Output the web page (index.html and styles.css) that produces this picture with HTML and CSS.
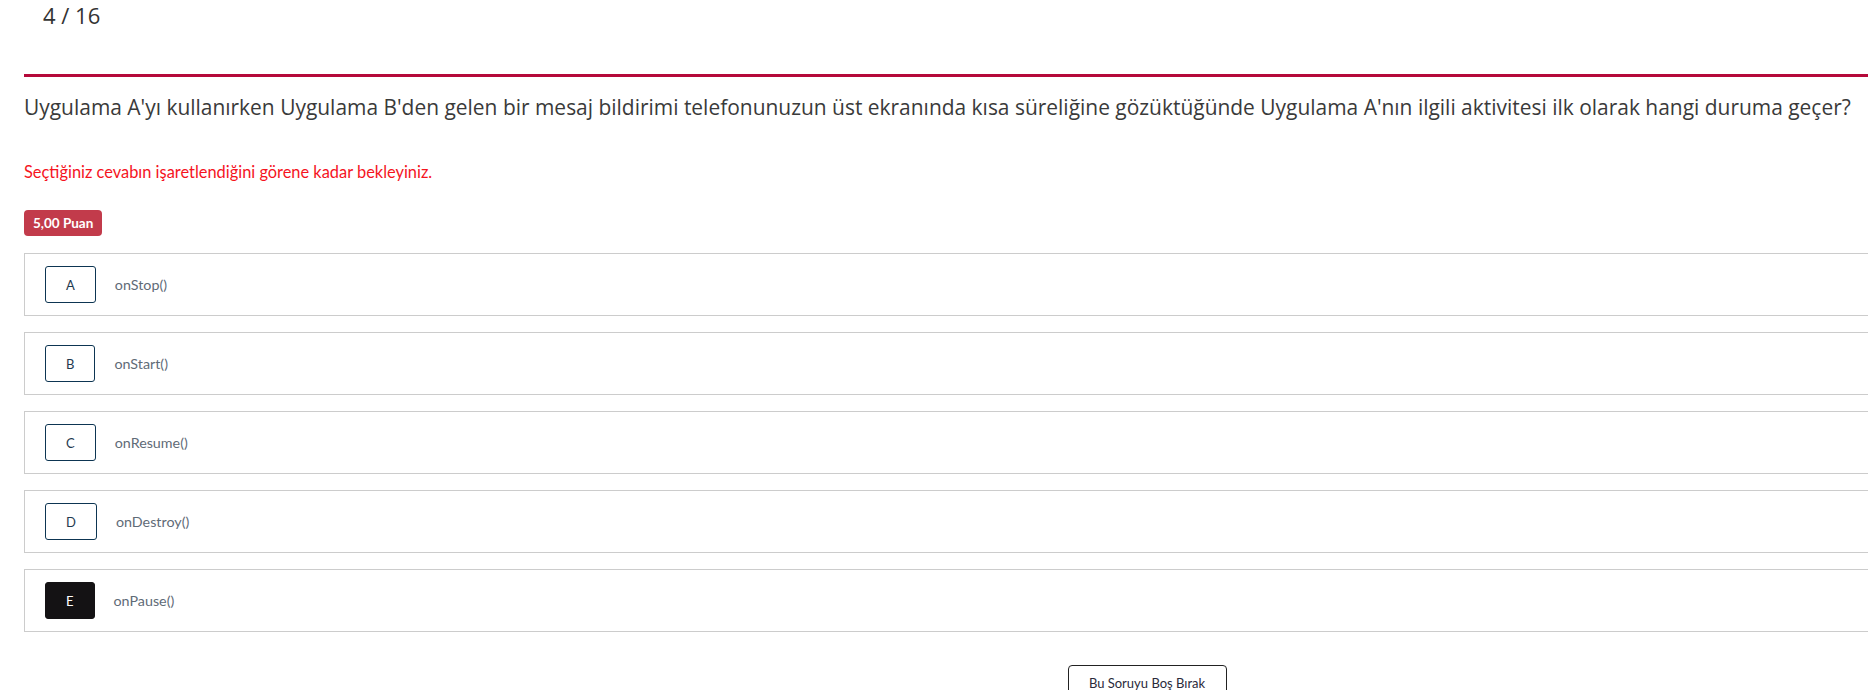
FILE: index.html
```html
<!DOCTYPE html>
<html lang="tr">
<head>
<meta charset="utf-8">
<title>Soru 4 / 16</title>
<link rel="stylesheet" href="styles.css">
</head>
<body>
<div class="page">
  <div class="counter">4 / 16</div>
  <div class="content">
    <h1 class="question">Uygulama A'yı kullanırken Uygulama B'den gelen bir mesaj bildirimi telefonunuzun üst ekranında kısa süreliğine gözüktüğünde Uygulama A'nın ilgili aktivitesi ilk olarak hangi duruma geçer?</h1>
    <p class="notice">Seçtiğiniz cevabın işaretlendiğini görene kadar bekleyiniz.</p>
    <div class="badge-row"><span class="badge">5,00 Puan</span></div>
    <ul class="options">
      <li class="option"><span class="letter">A</span><span class="answer">onStop()</span></li>
      <li class="option"><span class="letter">B</span><span class="answer">onStart()</span></li>
      <li class="option"><span class="letter">C</span><span class="answer">onResume()</span></li>
      <li class="option"><span class="letter">D</span><span class="answer">onDestroy()</span></li>
      <li class="option"><span class="letter selected">E</span><span class="answer">onPause()</span></li>
    </ul>
    <div class="actions"><button class="skip" type="button">Bu Soruyu Boş Bırak</button></div>
  </div>
</div>
</body>
</html>
```
FILE: styles.css
```css
html { overflow: hidden; }
body {
  margin: 0;
  background: #fff;
  font-family: "Open Sans", "Liberation Sans", sans-serif;
  color: #333;
}
.page {
  width: 2270px;
}
.counter {
  font-size: 22px;
  color: #333;
  padding-left: 43px;
  height: 74px;
  line-height: 30px;
}
.content {
  margin-left: 24px;
  border-top: 3px solid #b5093a;
}
.question {
  margin: 16px 0 0;
  font-size: 20.95px;
  font-weight: 400;
  line-height: 28px;
  color: #3a3a3a;
}
.notice {
  margin: 41px 0 0;
  font-family: Lato, "Open Sans", sans-serif;
  font-size: 16.4px;
  line-height: 20px;
  color: #f5141e;
}
.badge-row {
  margin-top: 28px;
  display: flex;
}
.badge {
  background: #c23b4b;
  color: #fff;
  font-family: Lato, "Open Sans", sans-serif;
  font-weight: 700;
  font-size: 13.5px;
  line-height: 26px;
  height: 26px;
  padding: 0 9px;
  border-radius: 4px;
}
.options {
  list-style: none;
  margin: 17px 0 0;
  padding: 0;
  display: flex;
  flex-direction: column;
  gap: 16px;
}
.option {
  display: flex;
  align-items: center;
  gap: 19px;
  border: 1px solid #cccccc;
  padding: 12px 20px;
  font-family: Lato, "Open Sans", sans-serif;
}
.letter {
  display: flex;
  align-items: center;
  justify-content: center;
  box-sizing: border-box;
  height: 37px;
  padding: 0 20px;
  border: 1px solid #0d3552;
  border-radius: 3px;
  font-size: 13px;
  color: #1f3a50;
}
.letter.selected {
  background: #141214;
  border-color: #141214;
  color: #fff;
}
.answer {
  font-size: 14.3px;
  color: #5f6b77;
}
.actions {
  margin-top: 33px;
  display: flex;
  justify-content: center;
}
.skip {
  display: block;
  box-sizing: border-box;
  font-family: Lato, "Open Sans", sans-serif;
  font-size: 13px;
  line-height: 18px;
  color: #2a2a3a;
  background: #fff;
  border: 1.5px solid #222;
  border-radius: 4px;
  width: 159px;
  height: 40px;
  padding: 0 0 5px;
  text-align: center;
}
```
